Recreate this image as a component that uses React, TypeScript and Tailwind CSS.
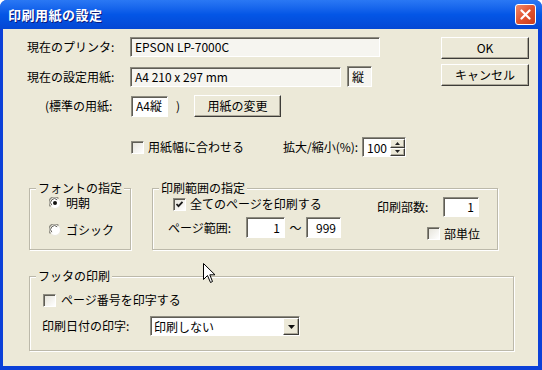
import type { ReactNode } from "react";

// XP 風の部品
function Field({ className = "", children, right = false }: { className?: string; children?: ReactNode; right?: boolean }) {
  return (
    <div
      className={`flex items-center border border-t-[#8d8b80] border-l-[#8d8b80] border-b-white border-r-white shadow-[inset_1px_1px_0_#5f5d55] px-[4px] leading-none ${
        right ? "justify-end" : ""
      } ${className}`}
    >
      {children}
    </div>
  );
}

function Btn({ className = "", children }: { className?: string; children: ReactNode }) {
  return (
    <div
      className={`flex items-center justify-center bg-[#ece9d8] border border-t-white border-l-white border-r-[#3d3c38] border-b-[#3d3c38] shadow-[inset_-1px_-1px_0_#aca899] ${className}`}
    >
      {children}
    </div>
  );
}

function Check({ checked = false }: { checked?: boolean }) {
  return (
    <div className="w-[13px] h-[13px] shrink-0 flex items-center justify-center bg-gradient-to-br from-[#e4e2d8] to-white border border-t-[#8d8b80] border-l-[#8d8b80] border-b-white border-r-white shadow-[inset_1px_1px_0_#5f5d55]">
      {checked && (
        <svg width="9" height="9" viewBox="0 0 9 9">
          <path d="M1.5 4 L3.5 6.2 L7.5 1.8" stroke="#1b1b1b" strokeWidth="1.8" fill="none" />
        </svg>
      )}
    </div>
  );
}

function Radio({ checked = false }: { checked?: boolean }) {
  return (
    <svg width="12" height="12" viewBox="0 0 12 12" className="shrink-0">
      <circle cx="6" cy="6" r="5.5" fill="#ffffff" stroke="#e9e7dd" />
      <path d="M1.5 9.5 A5 5 0 0 1 9.5 1.5" stroke="#8d8b80" strokeWidth="1.2" fill="none" />
      <path d="M2.8 8.2 A3.6 3.6 0 0 1 8.2 2.8" stroke="#5f5d55" strokeWidth="1" fill="none" />
      {checked && <circle cx="6" cy="6" r="2" fill="#111" />}
    </svg>
  );
}

function Group({ title, className = "", children }: { title: string; className?: string; children: ReactNode }) {
  return (
    <fieldset
      className={`shrink-0 border border-[#bcb9aa] shadow-[inset_1px_1px_0_#fff,1px_1px_0_#fff] ${className}`}
    >
      <legend className="ml-[6px] px-[2px] leading-[14px] bg-[#ece9d8]">{title}</legend>
      {children}
    </fieldset>
  );
}

export default function App() {
  return (
    <div className="w-[542px] h-[370px] flex flex-col bg-[#0b40d8] rounded-t-[7px] overflow-hidden font-['Noto_Sans_CJK_JP','Noto_Sans_CJK_SC',sans-serif] text-[12px] leading-[14px] text-black">
      {/* タイトルバー */}
      <div className="h-[29px] shrink-0 flex items-center bg-gradient-to-b from-[#2a78f4] via-[#0456e6] to-[#0447d4] pl-[8px] pr-[6px]">
        <span className="text-white font-bold text-[13px] tracking-[0.5px] [text-shadow:1px_1px_0_#0a1a80]">印刷用紙の設定</span>
        <div className="ml-auto w-[21px] h-[21px] rounded-[3px] border border-white bg-gradient-to-br from-[#f08a6a] via-[#e1532f] to-[#c93c1b] flex items-center justify-center">
          <svg width="11" height="11" viewBox="0 0 11 11">
            <path d="M1.5 1.5 L9.5 9.5 M9.5 1.5 L1.5 9.5" stroke="#fff" strokeWidth="2.2" strokeLinecap="round" />
          </svg>
        </div>
      </div>

      {/* 本体 */}
      <div className="relative flex-1 ml-[3px] mr-[4px] mb-[4px] bg-[#ece9d8]">
        <div className="flex">
          <div className="flex-1">
            <div className="mt-[8px] h-[20px] pl-[24px] flex items-center">
              <span className="w-[103px]">現在のプリンタ:</span>
              <Field className="w-[250px] h-[20px] bg-[#f6f5f0]">EPSON LP-7000C</Field>
            </div>
            <div className="mt-[9px] h-[21px] pl-[24px] flex items-center">
              <span className="w-[103px]">現在の設定用紙:</span>
              <Field className="w-[211px] h-[20px] bg-[#f6f5f0]">A4 210 x 297 mm</Field>
              <Field className="ml-[6px] w-[25px] h-[21px] bg-[#f6f5f0] px-[2px]">縦</Field>
            </div>
            <div className="mt-[8px] h-[22px] pl-[42px] flex items-center">
              <span className="w-[86px]">(標準の用紙:</span>
              <Field className="w-[37px] h-[21px] bg-white px-[2px]">A4縦</Field>
              <span className="w-[26px] pl-[8px]">)</span>
              <Btn className="w-[87px] h-[22px]">用紙の変更</Btn>
            </div>
            <div className="mt-[20px] h-[20px] pl-[128px] flex items-center">
              <Check />
              <span className="ml-[4px] w-[135px]">用紙幅に合わせる</span>
              <span className="w-[79px]">拡大/縮小(%):</span>
              <div className="w-[44px] h-[20px] flex items-stretch border border-t-[#8d8b80] border-l-[#8d8b80] border-b-white border-r-white shadow-[inset_1px_1px_0_#5f5d55] bg-white">
                <span className="flex-1 flex items-center pl-[4px] pt-[1px] leading-none">100</span>
                <div className="w-[15px] flex flex-col mt-[1px]">
                  <Btn className="flex-1">
                    <svg width="5" height="3" viewBox="0 0 5 3"><path d="M0 3 L2.5 0 L5 3 Z" fill="#222" /></svg>
                  </Btn>
                  <Btn className="flex-1">
                    <svg width="5" height="3" viewBox="0 0 5 3"><path d="M0 0 L2.5 3 L5 0 Z" fill="#222" /></svg>
                  </Btn>
                </div>
              </div>
            </div>
          </div>
          <div className="w-[88px] mr-[9px] flex flex-col">
            <Btn className="mt-[8px] h-[22px]">OK</Btn>
            <Btn className="mt-[5px] h-[22px]">キャンセル</Btn>
          </div>
        </div>

        {/* フォント / 印刷範囲 */}
        <div className="mt-[24px] pl-[26px] flex items-start">
          <Group title="フォントの指定" className="w-[102px] h-[69px]">
            <div className="pl-[19px]">
              <div className="mt-[1px] h-[14px] flex items-center">
                <Radio checked />
                <span className="ml-[5px]">明朝</span>
              </div>
              <div className="mt-[13px] h-[14px] flex items-center">
                <Radio />
                <span className="ml-[5px]">ゴシック</span>
              </div>
            </div>
          </Group>
          <Group title="印刷範囲の指定" className="ml-[21px] w-[346px] h-[69px]">
            <div className="flex">
              <div className="w-[224px] pl-[15px]">
                <div className="mt-[1px] h-[16px] pl-[5px] flex items-center">
                  <Check checked />
                  <span className="ml-[4px]">全てのページを印刷する</span>
                </div>
                <div className="mt-[5px] h-[21px] flex items-center">
                  <span className="w-[78px]">ページ範囲:</span>
                  <Field right className="w-[39px] h-[21px] bg-white">1</Field>
                  <span className="w-[21px] text-center">～</span>
                  <Field right className="w-[35px] h-[21px] bg-white">999</Field>
                </div>
              </div>
              <div>
                <div className="mt-[2px] h-[20px] flex items-center">
                  <span className="w-[66px]">印刷部数:</span>
                  <Field right className="w-[36px] h-[20px] bg-white">1</Field>
                </div>
                <div className="mt-[10px] h-[13px] pl-[50px] flex items-center">
                  <Check />
                  <span className="ml-[4px]">部単位</span>
                </div>
              </div>
            </div>
          </Group>
        </div>

        {/* フッタ */}
        <Group title="フッタの印刷" className="mt-[19px] ml-[26px] w-[485px] h-[82px]">
          <div className="mt-[9px] h-[16px] pl-[13px] flex items-center">
            <Check />
            <span className="ml-[5px]">ページ番号を印字する</span>
          </div>
          <div className="mt-[8px] h-[20px] pl-[12px] flex items-center">
            <span className="w-[108px]">印刷日付の印字:</span>
            <div className="w-[150px] h-[20px] flex items-stretch border border-t-[#8d8b80] border-l-[#8d8b80] border-b-white border-r-white shadow-[inset_1px_1px_0_#5f5d55] bg-white">
              <span className="flex-1 flex items-center pl-[3px] pt-[1px] leading-none">印刷しない</span>
              <Btn className="w-[16px] mt-[1px]">
                <svg width="7" height="4" viewBox="0 0 7 4"><path d="M0 0 L3.5 4 L7 0 Z" fill="#111" /></svg>
              </Btn>
            </div>
          </div>
        </Group>

        {/* マウスカーソル */}
        <svg width="13" height="21" viewBox="0 0 13 21" className="absolute left-[200px] top-[234px]">
          <path d="M0.5 0.5 L0.5 16.5 L4.5 12.5 L7.5 19.5 L9.5 18.5 L6.8 11.8 L12 11.8 Z" fill="#fff" stroke="#000" strokeWidth="1" strokeLinejoin="round" />
        </svg>
      </div>
    </div>
  );
}
